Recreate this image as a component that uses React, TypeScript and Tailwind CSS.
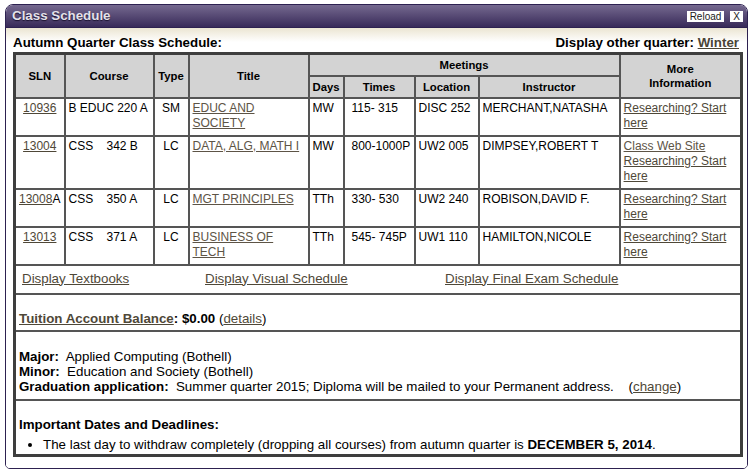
import React from "react";

const L = "text-[#4f4838] underline";

function Th({ children, className = "", ...rest }: any) {
  return (
    <th
      {...rest}
      className={`border-2 border-[#555] bg-[#d3d3d3] font-bold text-[11.33px] text-center align-middle px-[3px] leading-[14px] ${className}`}
    >
      {children}
    </th>
  );
}

function Td({ children, className = "", ...rest }: any) {
  return (
    <td
      {...rest}
      className={`border-2 border-[#555] align-top px-[3px] pt-[2px] pb-[4px] leading-[15px] ${className}`}
    >
      {children}
    </td>
  );
}

const rows = [
  { sln: "10936", suffix: "", course: "B EDUC 220 A", type: "SM", title: ["EDUC AND", "SOCIETY"], days: "MW", times: "115- 315", loc: "DISC 252", inst: "MERCHANT,NATASHA", web: false },
  { sln: "13004", suffix: "", course: "CSS    342 B", type: "LC", title: ["DATA, ALG, MATH I"], days: "MW", times: "800-1000P", loc: "UW2 005", inst: "DIMPSEY,ROBERT T", web: true },
  { sln: "13008", suffix: "A", course: "CSS    350 A", type: "LC", title: ["MGT PRINCIPLES"], days: "TTh", times: "330- 530", loc: "UW2 240", inst: "ROBISON,DAVID F.", web: false },
  { sln: "13013", suffix: "", course: "CSS    371 A", type: "LC", title: ["BUSINESS OF", "TECH"], days: "TTh", times: "545- 745P", loc: "UW1 110", inst: "HAMILTON,NICOLE", web: false },
];

export default function App() {
  return (
    <div
      className="w-[753px] h-[475px] bg-white pt-[4px] pl-[5px] text-[12px] text-black"
      style={{ fontFamily: '"Liberation Sans", Arial, Helvetica, sans-serif' }}
    >
      <div className="w-[743px] h-[465px] border border-[#2d2150] rounded-t-[8px] rounded-b-[5px] overflow-hidden flex flex-col">
        <div className="h-[23px] shrink-0 bg-[linear-gradient(to_bottom,#75698f,#382a59)] border-b border-[#2d2150] flex items-center justify-between pl-[6px] pr-[4px]">
          <span className="font-bold text-[13.33px] text-[#e4e2ea] [text-shadow:0_1px_1px_#1b1230]">
            Class Schedule
          </span>
          <div className="flex items-center gap-[6px]">
            <span className="bg-white text-[10px] leading-[11px] px-[3px] text-[#222]">Reload</span>
            <span className="bg-white text-[10px] leading-[11px] px-[3px] text-[#222]">X</span>
          </div>
        </div>
        <div className="flex-1 bg-[linear-gradient(to_bottom,#ebe5d2_0px,#ffffff_14px)] pl-[7px] pr-[5px] pt-[7px]">
          <div className="w-[727px] flex justify-between font-bold text-[13.33px] leading-[15px] mb-[2px]">
            <span>Autumn Quarter Class Schedule:</span>
            <span className="pr-[1px]">
              Display other quarter: <span className="text-[#4a4436] underline">Winter</span>
            </span>
          </div>
          <table className="border-collapse table-fixed w-[727px] border-[3px] border-[#3e3e3e]">
            <colgroup>
              <col className="w-[50px]" />
              <col className="w-[89px]" />
              <col className="w-[35px]" />
              <col className="w-[120px]" />
              <col className="w-[35px]" />
              <col className="w-[71px]" />
              <col className="w-[64px]" />
              <col className="w-[141px]" />
              <col className="w-[122px]" />
            </colgroup>
            <thead>
              <tr className="h-[22px]">
                <Th rowSpan={2}>SLN</Th>
                <Th rowSpan={2}>Course</Th>
                <Th rowSpan={2}>Type</Th>
                <Th rowSpan={2}>Title</Th>
                <Th colSpan={4}>Meetings</Th>
                <Th rowSpan={2}>
                  More
                  <br />
                  Information
                </Th>
              </tr>
              <tr className="h-[22px]">
                <Th>Days</Th>
                <Th>Times</Th>
                <Th>Location</Th>
                <Th>Instructor</Th>
              </tr>
            </thead>
            <tbody>
              {rows.map((r) => (
                <tr key={r.sln}>
                  <Td className={r.suffix ? "text-left !px-[3px]" : "text-center"}>
                    <span className={L}>{r.sln}</span>
                    {r.suffix}
                  </Td>
                  <Td className="whitespace-pre">{r.course}</Td>
                  <Td className="text-center">{r.type}</Td>
                  <Td>
                    {r.title.map((t, i) => (
                      <React.Fragment key={i}>
                        {i > 0 && <br />}
                        <span className="text-[#5d5446] underline">{t}</span>
                      </React.Fragment>
                    ))}
                  </Td>
                  <Td>{r.days}</Td>
                  <Td className="!pl-[7px] whitespace-pre">{r.times}</Td>
                  <Td>{r.loc}</Td>
                  <Td>{r.inst}</Td>
                  <Td>
                    {r.web && (
                      <>
                        <span className="text-[#5d5446] underline">Class Web Site</span>
                        <br />
                      </>
                    )}
                    <span className={L}>Researching? Start</span>
                    <br />
                    <span className={L}>here</span>
                  </Td>
                </tr>
              ))}
              <tr>
                <td colSpan={9} className="border-2 border-[#555] pt-[5px] pb-[7px] leading-[15px] text-[13.33px]">
                  <div className="grid grid-cols-[183px_240px_1fr] pl-[6px]">
                    <span><span className={L}>Display Textbooks</span></span>
                    <span><span className={L}>Display Visual Schedule</span></span>
                    <span><span className={L}>Display Final Exam Schedule</span></span>
                  </div>
                </td>
              </tr>
              <tr>
                <td colSpan={9} className="border-2 border-[#555] pt-[16px] pb-[4px] px-[3px] leading-[15px] text-[13.33px]">
                  <span className="font-bold">
                    <span className={L}>Tuition Account Balance</span>: $0.00
                  </span>{" "}
                  (<span className={L}>details</span>)
                </td>
              </tr>
              <tr>
                <td colSpan={9} className="border-2 border-[#555] pt-[17px] pb-[5px] px-[3px] leading-[15px] text-[13.33px] whitespace-pre">
                  <div><b>Major:</b>  Applied Computing (Bothell)</div>
                  <div><b>Minor:</b>  Education and Society (Bothell)</div>
                  <div>
                    <b>Graduation application:</b>  Summer quarter 2015; Diploma will be mailed to your Permanent address.    (<span className={L}>change</span>)
                  </div>
                </td>
              </tr>
              <tr>
                <td colSpan={9} className="border-2 border-[#555] pt-[16px] pb-[2px] px-[3px] leading-[15px] text-[13.33px]">
                  <div className="font-bold">Important Dates and Deadlines:</div>
                  <ul className="list-disc pl-[24px] mt-[5px]">
                    <li>
                      The last day to withdraw completely (dropping all courses) from autumn quarter is{" "}
                      <b>DECEMBER 5, 2014</b>.
                    </li>
                  </ul>
                </td>
              </tr>
            </tbody>
          </table>
        </div>
      </div>
    </div>
  );
}
